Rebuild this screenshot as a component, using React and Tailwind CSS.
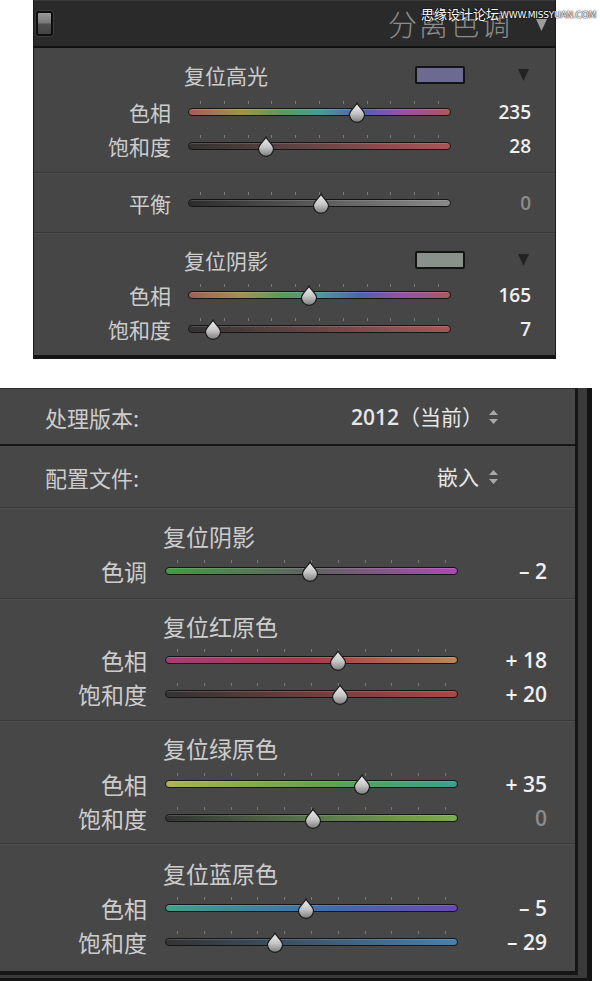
import React from "react";

const CJK = "font-['Noto_Sans_CJK_SC','Noto_Sans',sans-serif]";
const NUM = "font-['Open_Sans','Noto_Sans_CJK_SC',sans-serif]";

const GRAD = {
  hue: "bg-[linear-gradient(90deg,#a85a5a_0%,#a0944c_20%,#5a9a5a_36%,#4a9a9a_50%,#5060b0_66%,#9a50a8_82%,#a85a5a_100%)]",
  satRed: "bg-[linear-gradient(90deg,#333_0%,#5a4040_35%,#a85656_100%)]",
  balance: "bg-[linear-gradient(90deg,#2c2c2c_0%,#8a8a8a_100%)]",
  tint: "bg-[linear-gradient(90deg,#449a44_0%,#626262_50%,#a84cb0_100%)]",
  redHue: "bg-[linear-gradient(90deg,#a83a7a_0%,#a83a48_50%,#b88858_100%)]",
  redSat: "bg-[linear-gradient(90deg,#333_0%,#6a3c3c_45%,#ac4646_100%)]",
  greenHue: "bg-[linear-gradient(90deg,#acb450_0%,#60a250_55%,#3aa08c_100%)]",
  greenSat: "bg-[linear-gradient(90deg,#333_0%,#56704a_45%,#7cac50_100%)]",
  blueHue: "bg-[linear-gradient(90deg,#3ca28a_0%,#406cac_55%,#6a48b4_100%)]",
  blueSat: "bg-[linear-gradient(90deg,#333_0%,#3c5468_45%,#4a80ac_100%)]",
};

function Thumb() {
  return (
    <svg width="21" height="21" viewBox="0 0 21 21">
      <defs>
        <linearGradient id="thumbFill" x1="0" y1="0" x2="0" y2="1">
          <stop offset="0" stopColor="#f2f2f2" />
          <stop offset="0.55" stopColor="#c4c4c4" />
          <stop offset="1" stopColor="#7c7c7c" />
        </linearGradient>
      </defs>
      <path
        d="M10.5 1 C12 5 18 8.5 18 12.8 A7.5 7.5 0 0 1 3 12.8 C3 8.5 9 5 10.5 1 Z"
        fill="url(#thumbFill)"
        stroke="#1c1c1c"
        strokeWidth="1.2"
      />
    </svg>
  );
}

function Track({ grad, pos, width }) {
  return (
    <div className={`relative h-[34px] flex items-center ${width}`}>
      {/* tick marks above the groove */}
      <div className="absolute left-0 right-0 top-[6px] flex justify-between px-[12px]">
        {Array.from({ length: 11 }).map((_, i) => (
          <span key={i} className="w-px h-[3px] bg-[#7a7a7a]" />
        ))}
      </div>
      <div className={`w-full h-[8px] rounded-full border border-[#151515] shadow-[inset_0_1px_0_rgba(255,255,255,0.15)] ${grad}`} />
      <div
        className="absolute top-[7px] -translate-x-1/2"
        style={{ left: `${pos * 100}%` }}
      >
        <Thumb />
      </div>
    </div>
  );
}

function Row({ label, grad, pos, value, dim, big }) {
  return (
    <div className="flex items-center h-[34px]">
      <div className={`${big ? "w-[147px] text-[23px]" : "w-[137px] text-[21px]"} text-right text-[#cdcdcd] leading-none ${CJK}`}>
        {label}
      </div>
      <div className={big ? "ml-[18px]" : "ml-[17px]"}>
        <Track grad={grad} pos={pos} width={big ? "w-[293px]" : "w-[263px]"} />
      </div>
      <div
        className={`${big ? "w-[89px] text-[21px]" : "w-[80px] text-[19px]"} text-right font-semibold leading-none whitespace-pre ${NUM} ${dim ? "text-[#8c8c8c]" : "text-[#f0f0f0]"}`}
      >
        {value}
      </div>
    </div>
  );
}

function Divider() {
  return <div className="h-[2px] border-t border-[#383838] bg-[#505050]" />;
}

function Caret({ className }) {
  return (
    <svg width="11" height="12" viewBox="0 0 11 12" className={className}>
      <polygon points="0,0 11,0 5.5,12" fill="currentColor" />
    </svg>
  );
}

function UpDown() {
  return (
    <svg width="9" height="14" viewBox="0 0 9 14" className="text-[#a8a8a8]">
      <polygon points="4.5,0 9,5 0,5" fill="currentColor" />
      <polygon points="0,9 9,9 4.5,14" fill="currentColor" />
    </svg>
  );
}

function SplitToning() {
  return (
    <div className="ml-[33px] w-[523px] h-[359px] flex flex-col bg-[#464646] border-x border-[#1a1a1a] border-b-4 border-b-[#141414]">
      {/* panel header */}
      <div className="h-[48px] shrink-0 flex items-center bg-[#2a2a2a] border-t border-[#3a3a3a] border-b-2 border-b-[#111]">
        <div className="ml-[2px] w-[17px] h-[25px] rounded-[3px] border-2 border-[#0e0e0e] bg-[linear-gradient(180deg,#9a9a9a_0%,#7a7a7a_45%,#4e4e4e_55%,#444_100%)] shadow-[0_0_0_1px_#3c3c3c]" />
        <div className={`ml-auto text-[29px] leading-none font-light text-[#8c8c8c] tracking-[2px] ${CJK}`}>分离色调</div>
        <Caret className="ml-[24px] mr-[8px] text-[#9c9c9c] mt-[2px]" />
      </div>

      {/* highlights */}
      <div className="h-[124px] shrink-0 pt-[13px]">
        <div className="flex items-center h-[28px] pl-[150px]">
          <div className={`flex-1 text-[21px] leading-none text-[#cdcdcd] ${CJK}`}>复位高光</div>
          <div className="w-[50px] h-[18px] border-2 border-[#141414] rounded-[2px] bg-[#6c6a90]" />
          <Caret className="ml-[53px] mr-[26px] text-[#222]" />
        </div>
        <div className="mt-[6px]">
          <Row label="色相" grad={GRAD.hue} pos={0.643} value="235" />
          <Row label="饱和度" grad={GRAD.satRed} pos={0.297} value="28" />
        </div>
      </div>
      <Divider />

      {/* balance */}
      <div className="h-[58px] shrink-0 pt-[12px]">
        <Row label="平衡" grad={GRAD.balance} pos={0.506} value="0" dim />
      </div>
      <Divider />

      {/* shadows */}
      <div className="flex-1 pt-[12px]">
        <div className="flex items-center h-[28px] pl-[150px]">
          <div className={`flex-1 text-[21px] leading-none text-[#cdcdcd] ${CJK}`}>复位阴影</div>
          <div className="w-[50px] h-[18px] border-2 border-[#141414] rounded-[2px] bg-[#8a908a]" />
          <Caret className="ml-[53px] mr-[26px] text-[#222]" />
        </div>
        <div className="mt-[4px]">
          <Row label="色相" grad={GRAD.hue} pos={0.46} value="165" />
          <Row label="饱和度" grad={GRAD.satRed} pos={0.095} value="7" />
        </div>
      </div>
    </div>
  );
}

function Heading({ children }) {
  return (
    <div className={`h-[28px] flex items-center pl-[163px] text-[23px] leading-none text-[#cdcdcd] ${CJK}`}>
      {children}
    </div>
  );
}

function Calibration() {
  return (
    <div className="mt-[29px] w-[592px] h-[593px] bg-[#3a3a3a] border-r-[5px] border-b-[3px] border-[#141414]">
      <div className="w-[578px] h-[587px] flex flex-col bg-[#474747] border-t border-[#2c2c2c] border-r-[3px] border-b-[4px] border-r-[#161616] border-b-[#161616]">
        {/* process version */}
        <div className="h-[57px] shrink-0 flex items-center pl-[45px] pr-[77px] border-b-2 border-[#161616]">
          <div className={`text-[22px] leading-none text-[#cdcdcd] ${CJK}`}>处理版本:</div>
          <div className={`ml-auto text-[21px] leading-none text-[#e6e6e6] ${CJK}`}>
            <span className={`font-semibold ${NUM}`}>2012</span>（当前）
          </div>
          <div className="ml-[6px]"><UpDown /></div>
        </div>

        {/* profile */}
        <div className="h-[61px] shrink-0 flex items-center pl-[45px] pr-[77px]">
          <div className={`text-[22px] leading-none text-[#cdcdcd] ${CJK}`}>配置文件:</div>
          <div className={`ml-auto text-[21px] leading-none text-[#e6e6e6] ${CJK}`}>嵌入</div>
          <div className="ml-[10px]"><UpDown /></div>
        </div>
        <Divider />

        {/* shadows */}
        <div className="h-[89px] shrink-0 pt-[13px]">
          <Heading>复位阴影</Heading>
          <div className="mt-[4px]">
            <Row big label="色调" grad={GRAD.tint} pos={0.495} value="– 2" />
          </div>
        </div>
        <Divider />

        {/* red primary */}
        <div className="h-[120px] shrink-0 pt-[12px]">
          <Heading>复位红原色</Heading>
          <div className="mt-[3px]">
            <Row big label="色相" grad={GRAD.redHue} pos={0.59} value="+ 18" />
            <Row big label="饱和度" grad={GRAD.redSat} pos={0.597} value="+ 20" />
          </div>
        </div>
        <Divider />

        {/* green primary */}
        <div className="h-[121px] shrink-0 pt-[12px]">
          <Heading>复位绿原色</Heading>
          <div className="mt-[5px]">
            <Row big label="色相" grad={GRAD.greenHue} pos={0.672} value="+ 35" />
            <Row big label="饱和度" grad={GRAD.greenSat} pos={0.505} value="0" dim />
          </div>
        </div>
        <Divider />

        {/* blue primary */}
        <div className="flex-1 pt-[14px]">
          <Heading>复位蓝原色</Heading>
          <div className="mt-[4px]">
            <Row big label="色相" grad={GRAD.blueHue} pos={0.481} value="– 5" />
            <Row big label="饱和度" grad={GRAD.blueSat} pos={0.375} value="– 29" />
          </div>
        </div>
      </div>
    </div>
  );
}

export default function App() {
  return (
    <div className="relative w-[600px] h-[981px] bg-white overflow-hidden">
      <SplitToning />
      <Calibration />
      {/* site watermark */}
      <div className="absolute left-[421px] top-[7px] flex items-end gap-[1px] whitespace-nowrap text-white [text-shadow:0_0_2px_#000,0_0_1px_#000]">
        <span className={`text-[13px] leading-none ${CJK}`}>思缘设计论坛</span>
        <span className="text-[9px] leading-none tracking-[-0.2px] font-['DejaVu_Sans',sans-serif]">WWW.MISSYUAN.COM</span>
      </div>
    </div>
  );
}
